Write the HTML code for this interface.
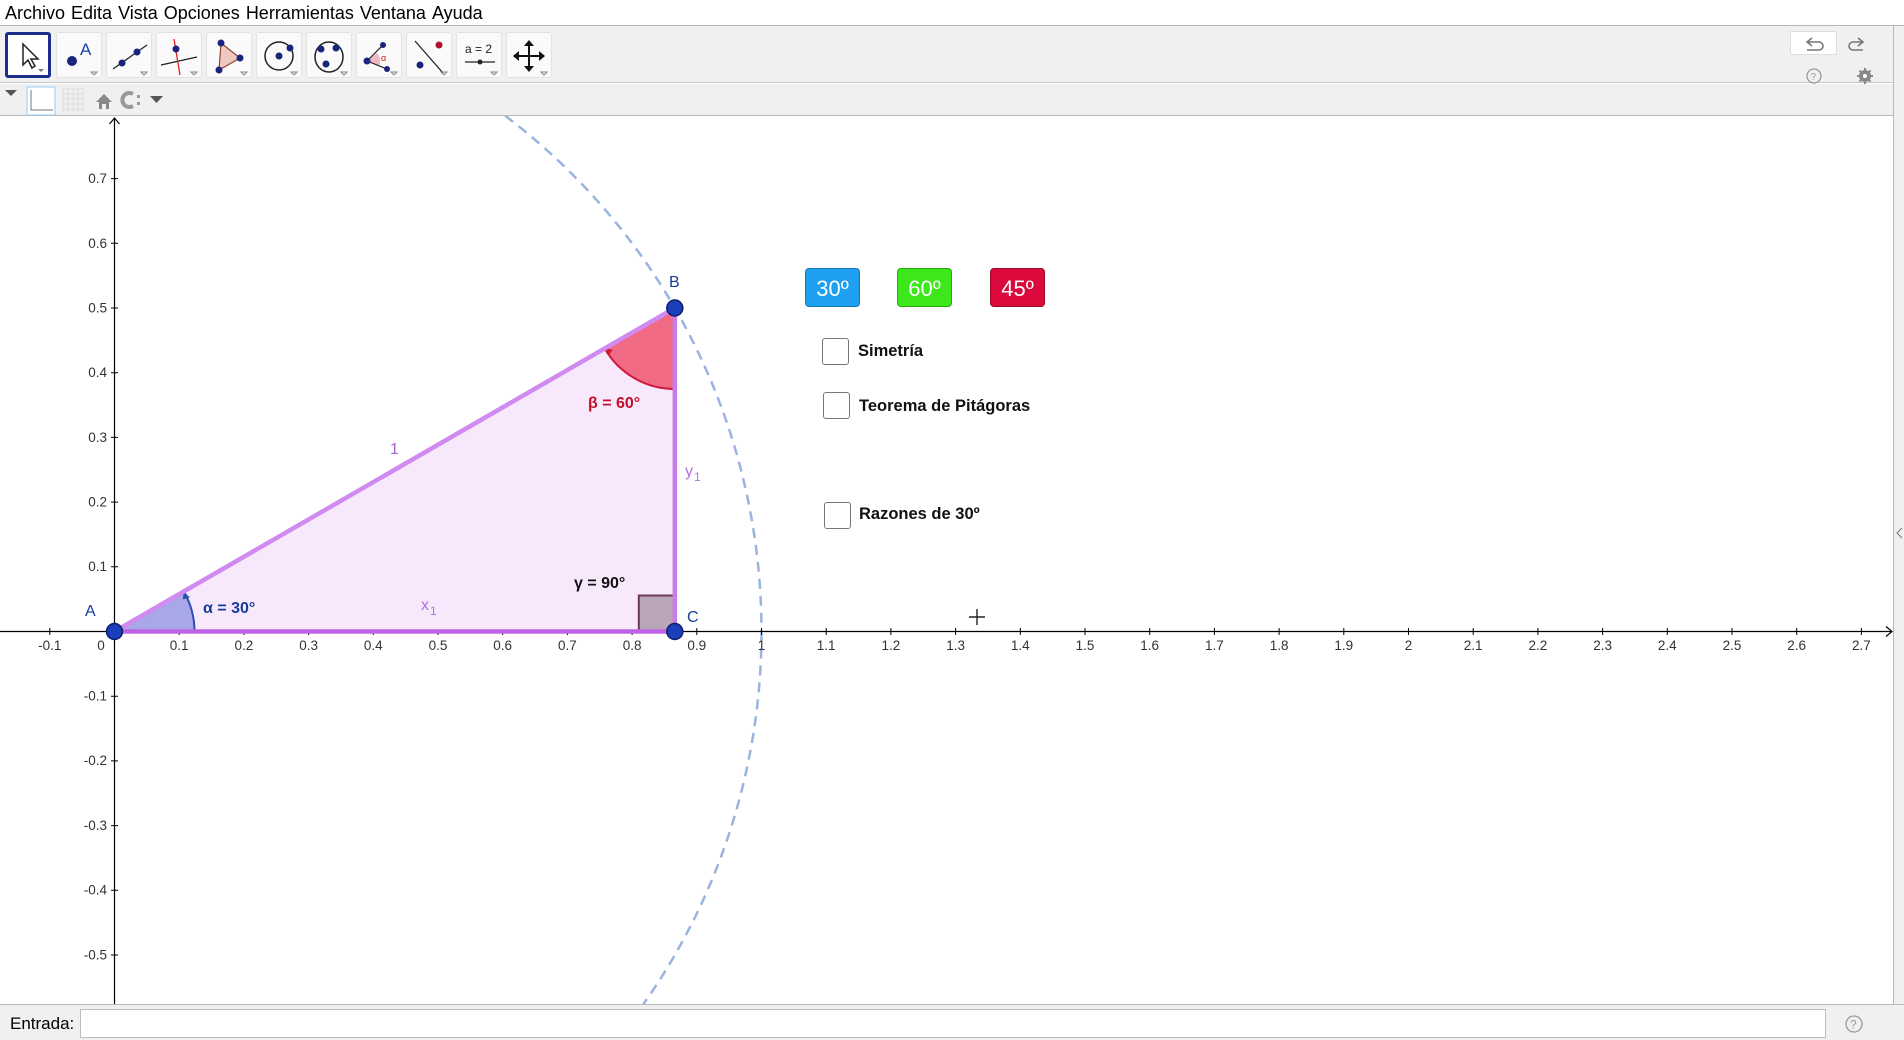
<!DOCTYPE html>
<html><head><meta charset="utf-8"><style>
*{margin:0;padding:0;box-sizing:border-box}
html,body{width:1904px;height:1040px;overflow:hidden}
body{background:#fff;font-family:"Liberation Sans",Arial,sans-serif;position:relative}
#menu{position:absolute;left:0;top:0;width:1904px;height:26px;background:#fff;border-bottom:1px solid #b8b8b8;font-size:18px;line-height:26px;padding-left:5px;color:#000;white-space:nowrap}
#menu span{margin-right:6px}
#tb{position:absolute;left:0;top:26px;width:1893px;height:57px;background:#f0f0f0;border-bottom:1px solid #c8c8c8}
.btn{position:absolute;top:6px;width:46px;height:46px;background:#fafafa;border:1px solid #e2e2e2;border-radius:3px}
.btn svg{position:absolute;left:0;top:0}
#bar2{position:absolute;left:0;top:84px;width:1893px;height:32px;background:#f0f0f0;border-bottom:1px solid #b8b8b8}
#right{position:absolute;left:1893px;top:26px;width:11px;height:978px;background:#f0f0f0;border-left:1px solid #b8b8b8}
#input{position:absolute;left:0;top:1004px;width:1904px;height:36px;background:#f0f0f0;border-top:1px solid #b8b8b8}
#input .lab{position:absolute;left:10px;top:9px;font-size:17px;color:#000}
#input .box{position:absolute;left:80px;top:4px;width:1746px;height:29px;background:#fff;border:1px solid #bdbdbd}
.gb{position:absolute;top:268px;width:55px;height:39px;border-radius:4px;color:#fff;font-size:22px;text-align:center;line-height:40px}
.cb{position:absolute;width:27px;height:27px;border:1.5px solid #777;border-radius:3px;background:#fff}
.ct{position:absolute;font-size:16.5px;font-weight:bold;color:#111}
</style></head><body>
<div id="menu"><span>Archivo</span><span>Edita</span><span>Vista</span><span>Opciones</span><span>Herramientas</span><span>Ventana</span><span>Ayuda</span></div>
<div id="tb">
<div class="btn" style="left:5px;border:3px solid #1b2e8a;background:#fff"><svg width="40" height="40"><path d="M15 9 L15 30 L20 25 L24 33 L27 31 L23 24 L30 24 Z" fill="#fff" stroke="#222" stroke-width="1.5"/><path d="M36 34 l-3 3 l-3 -3z" fill="#777"/></svg></div>
<div class="btn" style="left:56px"><svg width="46" height="46"><circle cx="15" cy="28" r="5" fill="#1a237e"/><text x="23" y="22" font-size="17" fill="#1a3fb0" font-family="Liberation Sans">A</text><path d="M40 39 l-3 3 l-3 -3z" fill="none" stroke="#888"/></svg></div>
<div class="btn" style="left:106px"><svg width="46" height="46"><line x1="6" y1="36" x2="40" y2="12" stroke="#222" stroke-width="1.3"/><circle cx="15" cy="30" r="3.5" fill="#1a237e"/><circle cx="30" cy="19" r="3.5" fill="#1a237e"/><path d="M40 39 l-3 3 l-3 -3z" fill="none" stroke="#888"/></svg></div>
<div class="btn" style="left:156px"><svg width="46" height="46"><line x1="4" y1="32" x2="40" y2="24" stroke="#222" stroke-width="1.3"/><line x1="17" y1="6" x2="23" y2="42" stroke="#d22" stroke-width="1.3"/><circle cx="19" cy="16" r="3.5" fill="#1a237e"/><path d="M40 39 l-3 3 l-3 -3z" fill="none" stroke="#888"/></svg></div>
<div class="btn" style="left:206px"><svg width="46" height="46"><path d="M14 10 L33 25 L12 37 Z" fill="#f0c8c0" stroke="#8a4a3a" stroke-width="1.2"/><circle cx="14" cy="10" r="3.5" fill="#1a237e"/><circle cx="33" cy="25" r="3.5" fill="#1a237e"/><circle cx="12" cy="37" r="3.5" fill="#1a237e"/><path d="M40 39 l-3 3 l-3 -3z" fill="none" stroke="#888"/></svg></div>
<div class="btn" style="left:256px"><svg width="46" height="46"><circle cx="22" cy="23" r="14" fill="none" stroke="#222" stroke-width="1.5"/><circle cx="22" cy="23" r="3.5" fill="#1a237e"/><circle cx="33" cy="15" r="3.5" fill="#1a237e"/><path d="M40 39 l-3 3 l-3 -3z" fill="none" stroke="#888"/></svg></div>
<div class="btn" style="left:306px"><svg width="46" height="46"><ellipse cx="22" cy="24" rx="14" ry="15" fill="none" stroke="#222" stroke-width="1.5"/><circle cx="14" cy="16" r="3.5" fill="#1a237e"/><circle cx="29" cy="15" r="3.5" fill="#1a237e"/><circle cx="19" cy="31" r="3.5" fill="#1a237e"/><path d="M40 39 l-3 3 l-3 -3z" fill="none" stroke="#888"/></svg></div>
<div class="btn" style="left:356px"><svg width="46" height="46"><path d="M10 28 L20 20 A12 12 0 0 1 22 33 Z" fill="#f0b8c0"/><line x1="10" y1="28" x2="26" y2="12" stroke="#222" stroke-width="1.2"/><line x1="10" y1="28" x2="30" y2="36" stroke="#222" stroke-width="1.2"/><circle cx="10" cy="28" r="3.5" fill="#1a237e"/><circle cx="26" cy="12" r="3" fill="#1a237e"/><circle cx="30" cy="36" r="3" fill="#1a237e"/><text x="24" y="28" font-size="9" fill="#c22">α</text><path d="M40 39 l-3 3 l-3 -3z" fill="none" stroke="#888"/></svg></div>
<div class="btn" style="left:406px"><svg width="46" height="46"><line x1="8" y1="8" x2="36" y2="40" stroke="#222" stroke-width="1.3"/><circle cx="32" cy="12" r="3.5" fill="#b01030"/><circle cx="13" cy="32" r="3.5" fill="#1a237e"/><path d="M40 39 l-3 3 l-3 -3z" fill="none" stroke="#888"/></svg></div>
<div class="btn" style="left:456px"><svg width="46" height="46"><text x="8" y="20" font-size="12" fill="#222" font-family="Liberation Sans">a = 2</text><line x1="8" y1="29" x2="38" y2="29" stroke="#222" stroke-width="1.3"/><circle cx="23" cy="29" r="2.5" fill="#222"/><path d="M40 39 l-3 3 l-3 -3z" fill="none" stroke="#888"/></svg></div>
<div class="btn" style="left:506px"><svg width="46" height="46"><path d="M22 9 V37 M8 23 H36" stroke="#111" stroke-width="2"/><path d="M22 7 l-5 6 h10z M22 39 l-5 -6 h10z M6 23 l6 -5 v10z M38 23 l-6 -5 v10z" fill="#111"/><path d="M40 39 l-3 3 l-3 -3z" fill="none" stroke="#888"/></svg></div>
<div style="position:absolute;left:1790px;top:5px;width:47px;height:24px;background:#fff;border:1px solid #ddd;border-radius:2px"></div>
<svg style="position:absolute;left:1800px;top:6px" width="90" height="60"><path d="M12 6 l-5 4 l5 4 M7 10 h12 a4 4 0 0 1 0 8 h-12" fill="none" stroke="#777" stroke-width="1.6"/><path d="M58 6 l5 4 l-5 4 M63 10 h-10 a4 4 0 0 0 0 8 h10" fill="none" stroke="#777" stroke-width="1.6"/><circle cx="14" cy="44" r="7" fill="none" stroke="#999" stroke-width="1.3"/><text x="10.5" y="48" font-size="10" fill="#999" font-family="Liberation Sans">?</text><circle cx="65" cy="44" r="4.5" fill="none" stroke="#888" stroke-width="3"/><path d="M65 36 v16 M57 44 h16 M59.5 38.5 l11 11 M70.5 38.5 l-11 11" stroke="#888" stroke-width="2"/><circle cx="65" cy="44" r="2" fill="#fff"/></svg>
</div>
<div id="bar2">
<svg width="200" height="32"><path d="M5 6 h12 l-6 6z" fill="#555"/><rect x="27" y="3" width="28" height="28" fill="#fff" stroke="#9cc8f0"/><path d="M31 6 V26 H53" fill="none" stroke="#777" stroke-width="1"/><g stroke="#ddd" stroke-width="1"><path d="M62 5 h22 M62 10 h22 M62 15 h22 M62 20 h22 M62 25 h22 M63 4 v24 M68 4 v24 M73 4 v24 M78 4 v24 M83 4 v24"/></g><path d="M96 18 l8 -8 l8 8 h-3 v7 h-3 v-5 h-4 v5 h-3 v-7z" fill="#888"/><path d="M133 10 a7 7 0 1 0 0 12" fill="none" stroke="#999" stroke-width="4"/><rect x="137" y="11" width="3" height="3" fill="#999"/><rect x="137" y="18" width="3" height="3" fill="#999"/><path d="M150 12 h13 l-6.5 7z" fill="#555"/></svg>
</div>
<div id="right"><svg style="position:absolute;left:2px;top:500px" width="8" height="14"><path d="M6 2 L1 7 L6 12" fill="none" stroke="#777"/></svg></div>

<svg style="position:absolute;left:0;top:116px" width="1893" height="888" viewBox="0 116 1893 888">
<defs><clipPath id="c"><rect x="0" y="116" width="1893" height="888"/></clipPath></defs>
<g clip-path="url(#c)">
<circle cx="114.5" cy="631.5" r="647" fill="none" stroke="#9ab4e0" stroke-width="2.5" stroke-dasharray="10 7"/>
</g>
<g stroke="#000" stroke-width="1.2">
<line x1="114.5" y1="118" x2="114.5" y2="1004"/>
<line x1="0" y1="631.5" x2="1892" y2="631.5"/>
</g>
<path d="M109.5 124 L114.5 118 L119.5 124 M1886 626.5 L1892 631.5 L1886 636.5" fill="none" stroke="#000" stroke-width="1.2"/>
<g stroke="#000" stroke-width="1">
<path d="M49.8 628v7M179.2 628v7M243.9 628v7M308.6 628v7M373.3 628v7M438 628v7M502.7 628v7M567.4 628v7M632.1 628v7M696.8 628v7M761.5 628v7M826.2 628v7M890.9 628v7M955.6 628v7M1020.3 628v7M1085 628v7M1149.7 628v7M1214.4 628v7M1279.1 628v7M1343.8 628v7M1408.5 628v7M1473.2 628v7M1537.9 628v7M1602.6 628v7M1667.3 628v7M1732 628v7M1796.7 628v7M1861.4 628v7"/>
<path d="M111 178.6h7M111 243.3h7M111 308h7M111 372.7h7M111 437.4h7M111 502.1h7M111 566.8h7M111 696.2h7M111 760.9h7M111 825.6h7M111 890.3h7M111 955h7"/>
</g>
<g font-family="Liberation Sans" font-size="13.5" fill="#333" text-anchor="middle">
<text x="49.8" y="650">-0.1</text><text x="101" y="650">0</text><text x="179.2" y="650">0.1</text><text x="243.9" y="650">0.2</text><text x="308.6" y="650">0.3</text><text x="373.3" y="650">0.4</text><text x="438" y="650">0.5</text><text x="502.7" y="650">0.6</text><text x="567.4" y="650">0.7</text><text x="632.1" y="650">0.8</text><text x="696.8" y="650">0.9</text><text x="761.5" y="650">1</text><text x="826.2" y="650">1.1</text><text x="890.9" y="650">1.2</text><text x="955.6" y="650">1.3</text><text x="1020.3" y="650">1.4</text><text x="1085" y="650">1.5</text><text x="1149.7" y="650">1.6</text><text x="1214.4" y="650">1.7</text><text x="1279.1" y="650">1.8</text><text x="1343.8" y="650">1.9</text><text x="1408.5" y="650">2</text><text x="1473.2" y="650">2.1</text><text x="1537.9" y="650">2.2</text><text x="1602.6" y="650">2.3</text><text x="1667.3" y="650">2.4</text><text x="1732" y="650">2.5</text><text x="1796.7" y="650">2.6</text><text x="1861.4" y="650">2.7</text>
</g>
<g font-family="Liberation Sans" font-size="13.5" fill="#333" text-anchor="end">
<text x="107" y="183">0.7</text><text x="107" y="248">0.6</text><text x="107" y="312.5">0.5</text><text x="107" y="377">0.4</text><text x="107" y="442">0.3</text><text x="107" y="506.5">0.2</text><text x="107" y="571">0.1</text><text x="107" y="700.5">-0.1</text><text x="107" y="765">-0.2</text><text x="107" y="830">-0.3</text><text x="107" y="894.5">-0.4</text><text x="107" y="959.5">-0.5</text>
</g>
<path d="M114.5 631.5 L674.8 308 L674.8 631.5 Z" fill="#f8e8fc"/>
<path d="M114.5 631.5 L194.5 631.5 A80 80 0 0 0 183.8 591.5 Z" fill="#a8a8e8"/>
<path d="M194.5 631.5 A80 80 0 0 0 183.8 591.5" fill="none" stroke="#2d4fb0" stroke-width="2"/>
<path d="M183.8 591.5 l-1 8 l7 -2z" fill="#2d4fb0"/>
<path d="M674.8 308 L674.8 389 A81 81 0 0 1 604.7 348.5 Z" fill="#ef6a82"/>
<path d="M674.8 389 A81 81 0 0 1 604.7 348.5" fill="none" stroke="#d01838" stroke-width="2"/>
<path d="M604.7 348.5 l8 1 l-4 6z" fill="#d01838"/>
<rect x="638.8" y="595.5" width="36" height="36" fill="#b9a5b9" stroke="#6e3a52" stroke-width="2"/>
<g stroke-width="4.5" stroke-linecap="round">
<line x1="114.5" y1="631.5" x2="674.8" y2="308" stroke="#d08af0"/>
<line x1="674.8" y1="308" x2="674.8" y2="631.5" stroke="#c77ce8"/>
<line x1="114.5" y1="631.5" x2="674.8" y2="631.5" stroke="#be63e6"/>
</g>
<g fill="#1a3fb8" stroke="#0c1f6a" stroke-width="1.5">
<circle cx="114.5" cy="631.5" r="8"/><circle cx="674.8" cy="308" r="8"/><circle cx="674.8" cy="631.5" r="8"/>
</g>
<g font-family="Liberation Sans" font-size="16">
<text x="85" y="616" fill="#1a3a9a">A</text>
<text x="669" y="287" fill="#1a3a9a">B</text>
<text x="687" y="622" fill="#1a3a9a">C</text>
<text x="390" y="454" fill="#a866d6">1</text>
<text x="421" y="610" fill="#b070dc">x</text><text x="430" y="615" font-size="12" fill="#b070dc">1</text>
<text x="685" y="476" fill="#b070dc">y</text><text x="694" y="481" font-size="12" fill="#b070dc">1</text>
<text x="203" y="613" font-weight="bold" fill="#1a3a9a">α = 30°</text>
<text x="588" y="408" font-weight="bold" fill="#c0102a">β = 60°</text>
<text x="574" y="588" font-weight="bold" fill="#111">γ = 90°</text>
</g>
<path d="M969 617 h16 M977 609 v16" stroke="#222" stroke-width="1.4"/>
</svg>

<div class="gb" style="left:805px;background:#1ea0f0;border:1px solid #1479b8">30º</div>
<div class="gb" style="left:897px;background:#3ce81a;border:1px solid #2aa812">60º</div>
<div class="gb" style="left:990px;background:#dc0a3c;border:1px solid #9a0828">45º</div>
<div class="cb" style="left:822px;top:338px"></div><div class="ct" style="left:858px;top:342px">Simetría</div>
<div class="cb" style="left:823px;top:392px"></div><div class="ct" style="left:859px;top:397px">Teorema de Pitágoras</div>
<div class="cb" style="left:824px;top:502px"></div><div class="ct" style="left:859px;top:505px">Razones de 30º</div>

<div id="input"><div class="lab">Entrada:</div><div class="box"></div>
<svg style="position:absolute;left:1843px;top:8px" width="22" height="22"><circle cx="11" cy="11" r="8" fill="none" stroke="#999" stroke-width="1.3"/><text x="7" y="15.5" font-size="12" fill="#999" font-family="Liberation Sans">?</text></svg></div>
</body></html>
